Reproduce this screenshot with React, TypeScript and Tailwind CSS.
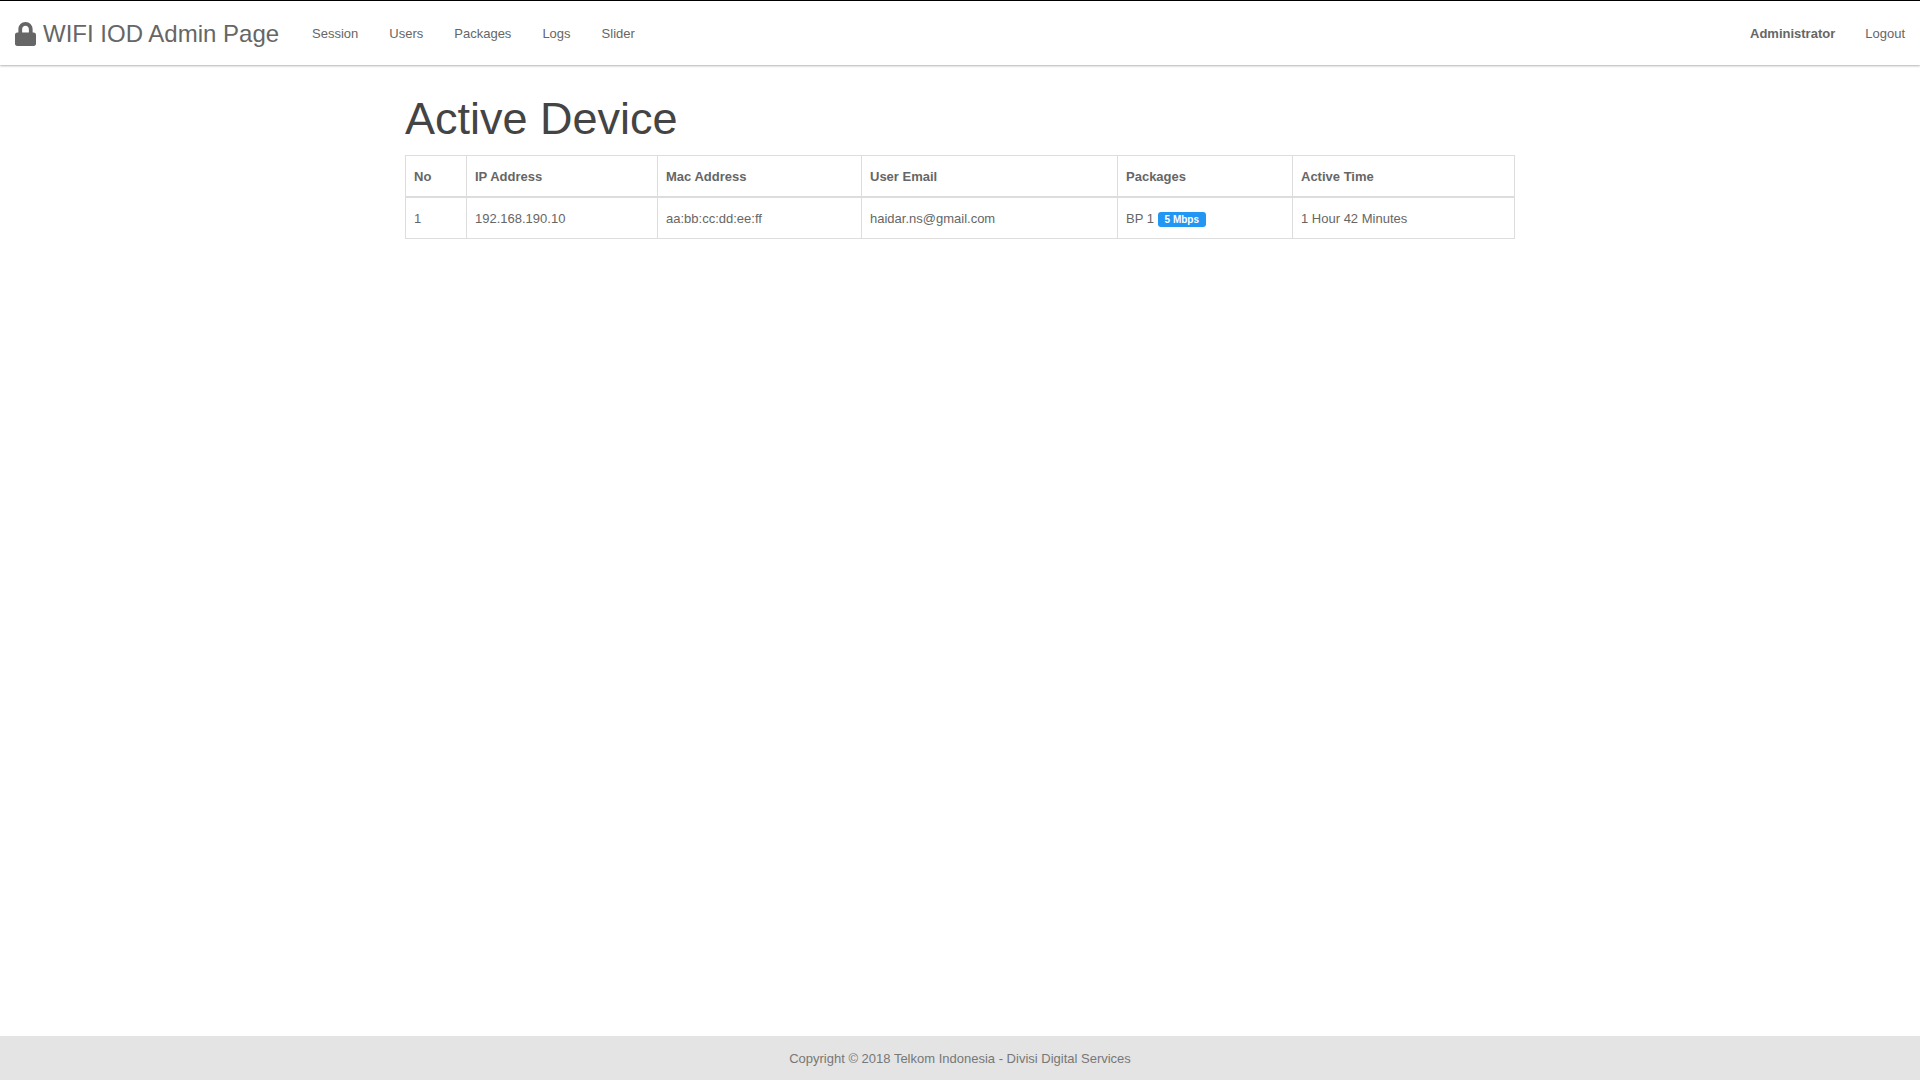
import React from "react";
import { FaLock } from "react-icons/fa";

const links = ["Session", "Users", "Packages", "Logs", "Slider"];

const columns = [
  { label: "No", width: "w-[61px]" },
  { label: "IP Address", width: "w-[191px]" },
  { label: "Mac Address", width: "w-[204px]" },
  { label: "User Email", width: "w-[256px]" },
  { label: "Packages", width: "w-[175px]" },
  { label: "Active Time", width: "" },
];

const devices = [
  {
    ip: "192.168.190.10",
    mac: "aa:bb:cc:dd:ee:ff",
    email: "haidar.ns@gmail.com",
    plan: "BP 1",
    speed: "5 Mbps",
    time: "1 Hour 42 Minutes",
  },
];

const cell = "border border-[#dddddd] px-2 pt-[9px] pb-[7px] align-top";

function Navbar() {
  return (
    <nav className="flex h-[65px] items-center border-t border-black bg-white pt-[2px] text-[#666666] shadow-[0_1px_2px_rgba(0,0,0,0.3)]">
      <a href="#" className="flex items-center gap-[7px] pr-[18px] pl-[15px] text-2xl">
        <FaLock className="h-6 w-[21px]" aria-hidden="true" />
        <span>WIFI IOD Admin Page</span>
      </a>
      <ul className="flex gap-px">
        {links.map((label) => (
          <li key={label}>
            <a href="#" className="block px-[15px]">{label}</a>
          </li>
        ))}
      </ul>
      <ul className="ml-auto flex">
        <li>
          <a href="#" className="block px-[15px] font-bold">Administrator</a>
        </li>
        <li>
          <a href="#" className="block px-[15px]">Logout</a>
        </li>
      </ul>
    </nav>
  );
}

export default function App() {
  return (
    <div className="flex min-h-screen flex-col bg-white font-['Liberation_Sans',Arial,sans-serif] text-[13px] leading-6 text-[#666666]">
      <Navbar />
      <main className="mx-auto w-full max-w-[1140px] flex-1 px-[15px] pt-[28px]">
        <h1 className="mb-[11px] text-[45px] leading-[51px] text-[#444444]">Active Device</h1>
        <table className="w-full table-fixed border-collapse">
          <thead>
            <tr>
              {columns.map((c) => (
                <th key={c.label} scope="col" className={`${c.width} border border-b-2 border-[#dddddd] px-2 pt-[9px] pb-[7px] text-left font-bold`}>
                  {c.label}
                </th>
              ))}
            </tr>
          </thead>
          <tbody>
            {devices.map((d, i) => (
              <tr key={d.mac}>
                <td className={cell}>{i + 1}</td>
                <td className={cell}>{d.ip}</td>
                <td className={cell}>{d.mac}</td>
                <td className={cell}>{d.email}</td>
                <td className={cell}>
                  {d.plan}{" "}
                  <span className="inline-block rounded-[3px] bg-[#2196f3] px-[7px] text-[10px] leading-[15px] font-bold text-white">
                    {d.speed}
                  </span>
                </td>
                <td className={cell}>{d.time}</td>
              </tr>
            ))}
          </tbody>
        </table>
      </main>
      <footer className="bg-[#e4e4e4] pt-[11px] pb-[9px] text-center text-[#777777]">
        Copyright © 2018 Telkom Indonesia - Divisi Digital Services
      </footer>
    </div>
  );
}
